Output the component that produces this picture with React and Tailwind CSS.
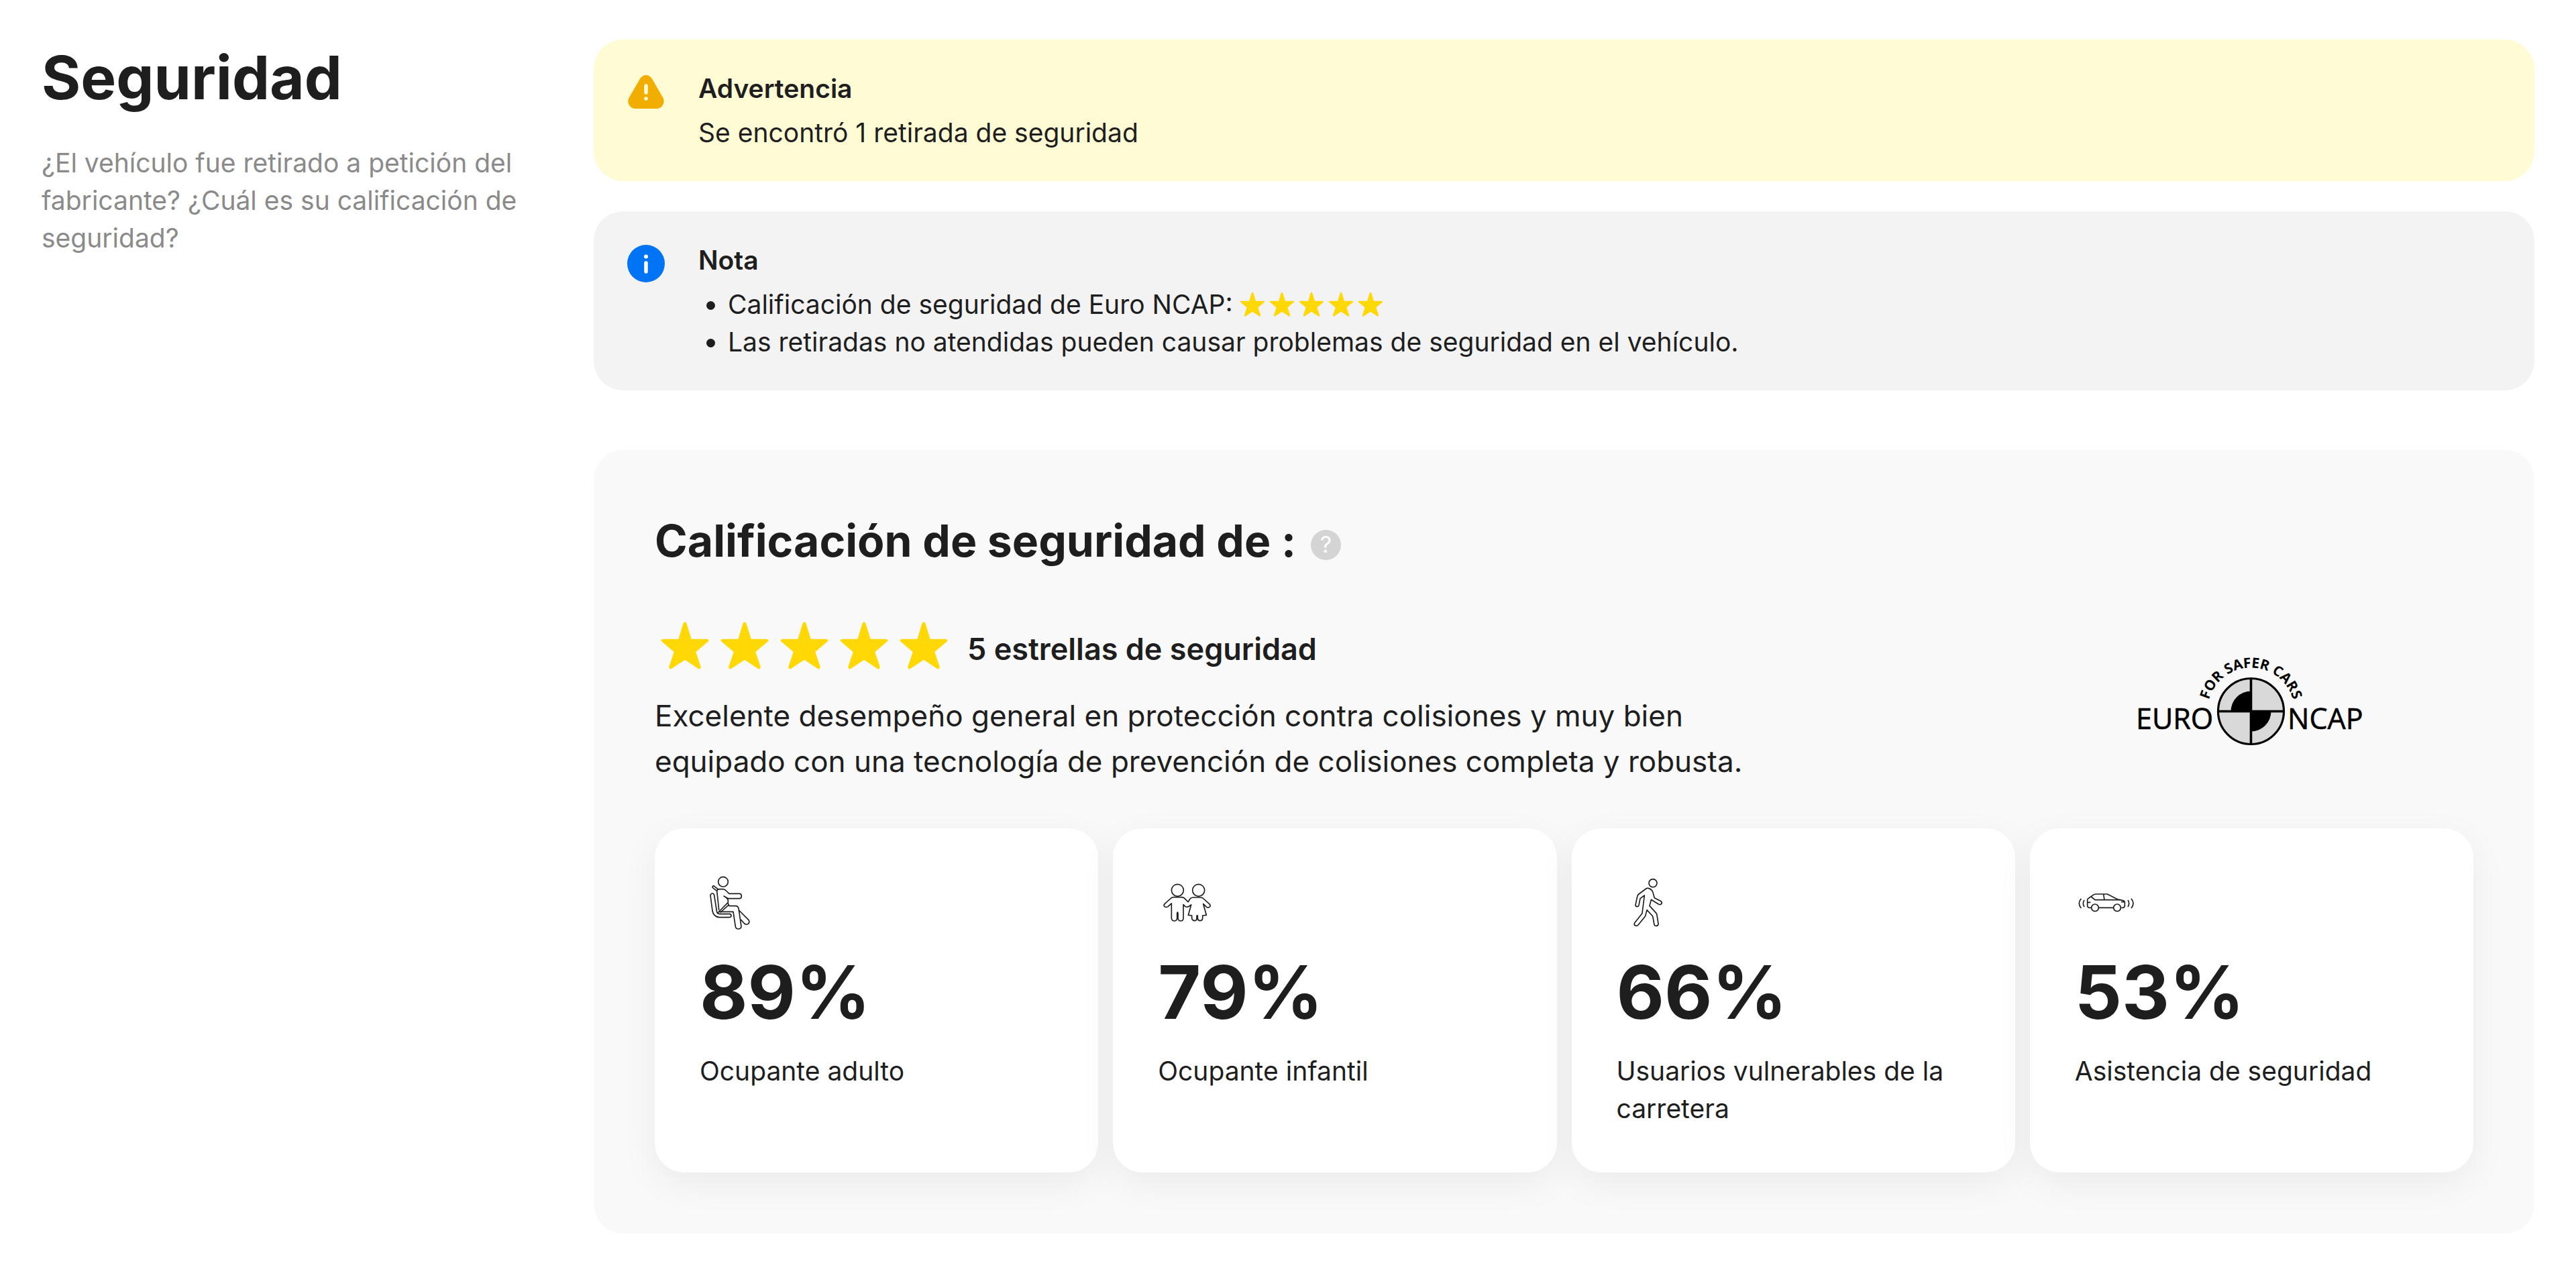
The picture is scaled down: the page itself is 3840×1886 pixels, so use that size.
import React from "react";

const STAR =
  "M50 2q2.500 0 3.500 3l9.500 31h31q6 1 3 5l-25 21 10 30q0 6-5 4l-27-18-27 18q-5 2-5-4l10-30-25-21q-3-4 3-5h31l9.500-31q1-3 3.500-3z";

function Stars({ className, gap }) {
  return (
    <span className={`inline-flex ${gap}`} role="img" aria-label="5 estrellas">
      {[0, 1, 2, 3, 4].map((i) => (
        <svg key={i} viewBox="0 0 100 100" className={className} fill="#ffd805">
          <path d={STAR} />
        </svg>
      ))}
    </span>
  );
}

function WarningIcon() {
  return (
    <svg viewBox="0 0 56 56" className="size-14 shrink-0" aria-hidden="true">
      <path d="M19 8.500C23 1 33 1 37 8.500L53.500 37C57 44 52 53 44 53H12C4 53 -1 44 2.500 37Z" fill="#f2ae00" />
      <path d="M28 19v10" stroke="#fffbd4" strokeWidth="5.500" strokeLinecap="round" />
      <circle cx="28" cy="38" r="2.800" fill="#fffbd4" />
    </svg>
  );
}

function InfoIcon() {
  return (
    <svg viewBox="0 0 56 56" className="size-14 shrink-0" aria-hidden="true">
      <circle cx="28" cy="28" r="28" fill="#0074f5" />
      <path d="M28 27v13" stroke="#fff" strokeWidth="5.500" strokeLinecap="round" />
      <circle cx="28" cy="17.500" r="3" fill="#fff" />
    </svg>
  );
}

function Notice({ icon, title, tone, children }) {
  return (
    <section className={`flex gap-[50px] rounded-[44px] pl-[50px] pr-12 pt-[45px] pb-11 ${tone}`}>
      <div className="pt-[5px]">{icon}</div>
      <div className="text-[39px] leading-14">
        <h2 className="font-semibold">{title}</h2>
        <div className="mt-[10px]">{children}</div>
      </div>
    </section>
  );
}

function NcapLogo() {
  return (
    <svg viewBox="0 0 400 170" className="w-[400px]" role="img" aria-label="Euro NCAP" fontFamily="'Open Sans', sans-serif">
      <defs>
        <path id="arc" d="M131.500 98.500A65 65 0 0 1 261.500 98.500" />
      </defs>
      <circle cx="196.500" cy="98.500" r="49" fill="#d9d9d9" stroke="#000" strokeWidth="3.200" />
      <path d="M196.500 98.500H166.500A30 30 0 0 1 196.500 68.500ZM196.500 98.500H226.500A30 30 0 0 1 196.500 128.500Z" />
      <path d="M196.500 49v99M147 98.500h99" stroke="#000" strokeWidth="3.600" />
      <text x="25" y="125" fontSize="43" stroke="#000" strokeWidth="0.600">EURO</text>
      <text x="251" y="125" fontSize="43" stroke="#000" strokeWidth="0.600">NCAP</text>
      <text fontSize="21" fontWeight="700" textAnchor="middle">
        <textPath href="#arc" startOffset="50%">FOR SAFER CARS</textPath>
      </text>
    </svg>
  );
}

const line = {
  viewBox: "0 0 420 360",
  className: "h-[120px] w-[140px]",
  fill: "none",
  stroke: "#1e1e1e",
  strokeWidth: 5,
  strokeLinecap: "round",
  strokeLinejoin: "round",
  "aria-hidden": true,
};

function AdultIcon() {
  return (
    <svg {...line}>
      <circle cx="171" cy="101" r="22" />
      <path d="M140 140L124 127q-3-7 5-8l20 16" />
      <path d="M152 226L143 142q2-8 12-8h15q8 0 14 7l14 13h47q8 1 8 11t-8 11h-51l-20-11q18 9 19 20v8L147 240M160 237l35-32" />
      <path d="M193 197q3 11 6 12h30q10 1 12 16l11 76q-1 10-13 11-11 0-13-11l-10-66h-62" />
      <path d="M114 162q2-9 9-9 6 0 8 8l12 76q3 8 14 8h43q8 2 7 9-1 6-9 6h-44q-27-3-31-29z" />
      <path d="M241 228l44 44q6 10-2 17-9 6-17-1l-15-17" />
    </svg>
  );
}

function ChildrenIcon() {
  return (
    <svg {...line} viewBox="-20 0 420 360">
      <circle cx="134" cy="139" r="27" />
      <circle cx="228" cy="139" r="27" />
      <path d="M181 191l-18-18q-5-3-12-3h-34q-7 0-12 4l-28 25q-7 7-1 13 7 5 15 0l16-14v66q1 12 13 12 11 0 12-12v-23q2-7 4 0v23q1 12 12 12 12 0 12-12v-61l8 8q9 6 18-1l9-6-13 46 16 2v13q2 10 12 10t10-10v-13h4v13q1 10 11 10t11-10v-13l17-2-14-50 15 14q8 5 14-1 5-6-2-13l-29-26q-5-3-12-3h-32q-6 0-11 4z" />
    </svg>
  );
}

function WalkIcon() {
  return (
    <svg {...line} viewBox="-41 0 420 360">
      <circle cx="187" cy="107" r="18" />
      <path d="M167 130q-5-2-11 2l-32 24q-6 5-7 11l-8 38q0 7 8 7 5 0 7-6l6-30 19-14-10 80-34 43q-4 8 3 12 8 3 13-3l30-37q3-4 4-10l5-20 26 28 7 38q3 7 11 5 8-2 7-10l-7-43-5-7-27-29 7-28 34 21q9 3 13-3 2-8-5-12l-27-14-7-24q-3-14-20-19z" />
    </svg>
  );
}

function CarIcon() {
  return (
    <svg {...line} strokeLinecap="butt">
      <path d="M139 217h-9q-7-1-8-7v-29q1-4 6-7l20-14q6-4 12-4h51l47 24 21 4q9 2 10 9v16q-1 7-8 8h-7M172 217h67" />
      <path d="M139 168l17 14h113M194 157l4 25M122 193h14M290 191h-17" />
      <circle cx="156" cy="217" r="16" />
      <circle cx="255" cy="217" r="16" />
      <path d="M94 176q-18 22 0 43M108 183q-10 15 0 30M303 183q10 15 0 30M318 176q18 22 0 43" />
    </svg>
  );
}

const ratings = [
  { Icon: AdultIcon, value: "89%", label: "Ocupante adulto" },
  { Icon: ChildrenIcon, value: "79%", label: "Ocupante infantil" },
  { Icon: WalkIcon, value: "66%", label: "Usuarios vulnerables de la carretera" },
  { Icon: CarIcon, value: "53%", label: "Asistencia de seguridad" },
];

export default function App() {
  return (
    <main className="flex gap-12 bg-white px-[62px] pt-[59px] pb-12 font-['Inter',sans-serif] text-[#1e1e1e]">
      <aside className="w-[775px] shrink-0">
        <h1 className="text-[89px] leading-[114px] font-bold">Seguridad</h1>
        <p className="mt-[42px] max-w-[730px] text-[39px] leading-14 text-[#8a8a8a]">
          ¿El vehículo fue retirado a petición del fabricante? ¿Cuál es su calificación de seguridad?
        </p>
      </aside>
      <div className="min-w-0 flex-1">
        <Notice icon={<WarningIcon />} title="Advertencia" tone="bg-[#fffbd4]">
          <p>Se encontró 1 retirada de seguridad</p>
        </Notice>
        <div className="mt-[45px]">
          <Notice icon={<InfoIcon />} title="Nota" tone="bg-[#f3f3f3]">
            <ul className="list-disc pl-11">
              <li>
                <span className="inline-flex items-center gap-[10px]">
                  Calificación de seguridad de Euro NCAP:
                  <Stars className="size-[38px]" gap="gap-[6px]" />
                </span>
              </li>
              <li>Las retiradas no atendidas pueden causar problemas de seguridad en el vehículo.</li>
            </ul>
          </Notice>
        </div>
        <section className="mt-[89px] rounded-[44px] bg-[#f9f9f9] p-[91px]">
          <h2 className="flex items-center gap-[22px] text-[66px] leading-[88px] font-bold">
            Calificación de seguridad de :
            <button
              type="button"
              aria-label="Ayuda"
              className="mt-3 flex size-[45px] items-center justify-center rounded-full bg-[#d4d4d4] text-[34px] leading-none font-normal text-white"
            >
              ?
            </button>
          </h2>
          <div className="mt-[74px] flex items-center justify-between">
            <div className="max-w-[1700px]">
              <div className="flex items-center gap-7 pl-2">
                <Stars className="size-[74px]" gap="gap-[15px]" />
                <p className="pt-[10px] text-[45px] leading-[67px] font-semibold">5 estrellas de seguridad</p>
              </div>
              <p className="mt-8 text-[44px] leading-[68px]">
                Excelente desempeño general en protección contra colisiones y muy bien equipado con una tecnología de
                prevención de colisiones completa y robusta.
              </p>
            </div>
            <div className="mr-32">
              <NcapLogo />
            </div>
          </div>
          <ul className="mt-[66px] grid grid-cols-4 gap-[22px]">
            {ratings.map(({ Icon, value, label }) => (
              <li
                key={label}
                className="min-h-[512px] rounded-[44px] bg-white px-[67px] pb-[67px] pt-[46px] shadow-[0_16px_56px_rgba(0,0,0,0.06)]"
              >
                <div className="-ml-[22px]">
                  <Icon />
                </div>
                <p className="mt-[10px] text-[110px] leading-[136px] font-bold">{value}</p>
                <p className="mt-[22px] text-[39px] leading-14">{label}</p>
              </li>
            ))}
          </ul>
        </section>
      </div>
    </main>
  );
}
